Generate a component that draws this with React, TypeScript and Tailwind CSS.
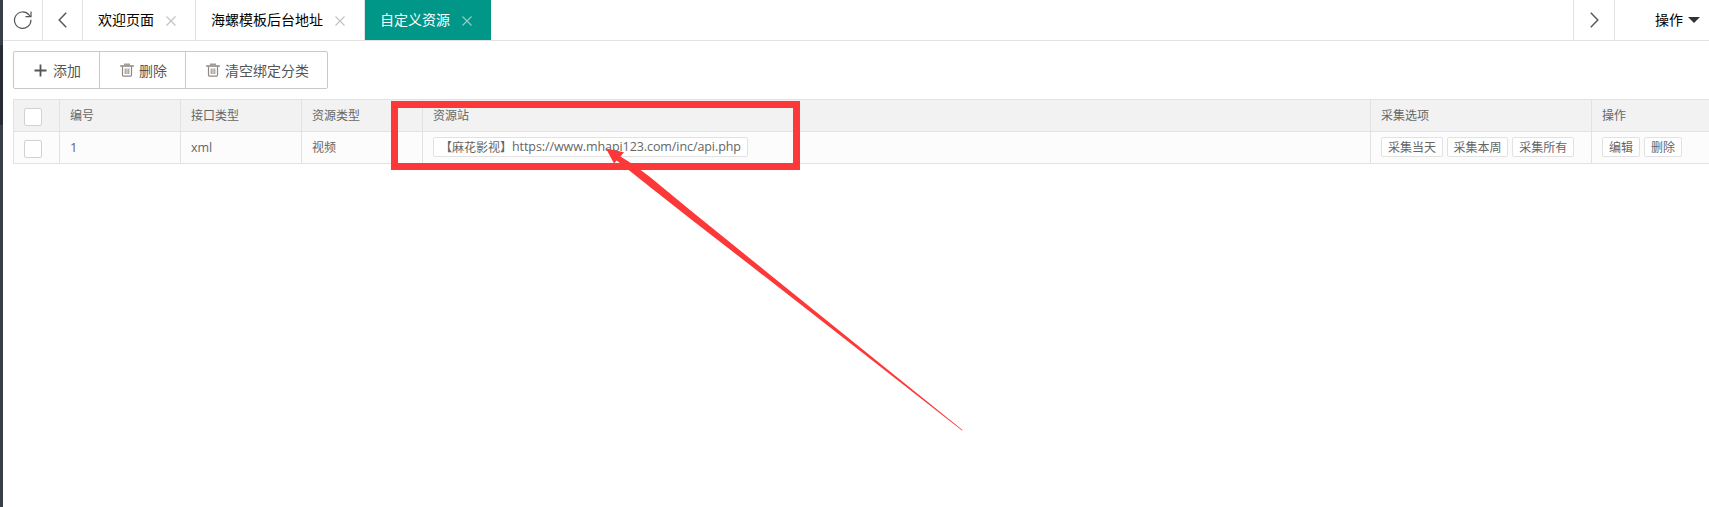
import React from "react";

const RefreshIcon = () => (
  <svg className="h-5 w-5" viewBox="0 0 20 20" fill="none" stroke="#555" strokeWidth="1.2">
    <path d="M17.9 9.8A8.2 8.2 0 1 1 16 4.9L17.4 6.4" />
    <path d="M18 1.5V6.6H12.5" />
  </svg>
);

const ChevronIcon = ({ flip }: { flip?: boolean }) => (
  <svg className={flip ? "h-4 w-[9px] rotate-180" : "h-4 w-[9px]"} viewBox="0 0 9 16" fill="none" stroke="#5a5a5a" strokeWidth="1.5">
    <path d="M8.2 0.8L1.2 8l7 7.2" />
  </svg>
);

const CloseIcon = ({ active }: { active?: boolean }) => (
  <svg className="mt-px h-[10px] w-[10px]" viewBox="0 0 10 10" fill="none" stroke={active ? "#93d0ca" : "#c2c2c2"} strokeWidth="1.1">
    <path d="M0.5 0.5l9 9M9.5 0.5l-9 9" />
  </svg>
);

const PlusIcon = () => (
  <svg className="h-[13px] w-[13px]" viewBox="0 0 13 13" stroke="#555" strokeWidth="1.8">
    <path d="M6.5 0.5v12M0.5 6.5h12" />
  </svg>
);

const TrashIcon = () => (
  <svg className="h-[14px] w-[14px]" viewBox="0 0 14 14" fill="none" stroke="#8d8784" strokeWidth="1">
    <path d="M4 1.2h6" strokeWidth="1.2" />
    <path d="M0.2 3h13.6" strokeWidth="2" stroke="#a5a09e" />
    <path d="M2.5 4v8q0 1.2 1 1.2h7q1 0 1-1.2V4" strokeWidth="1.2" />
    <path d="M5.2 5.5v5.5M7 5.5v5.5M8.8 5.5v5.5" />
  </svg>
);

const Tab = ({ label, width, active }: { label: string; width: string; active?: boolean }) => (
  <div
    className={`flex h-10 shrink-0 items-center justify-between pl-[15px] pr-[19px] text-[14px] leading-none ${width} ${
      active ? "bg-[#009688] text-white" : "border-r border-[#e2e2e2] text-black"
    }`}
  >
    <span className="whitespace-nowrap">{label}</span>
    <CloseIcon active={active} />
  </div>
);

const ToolButton = ({ label, width, icon }: { label: string; width: string; icon: React.ReactNode }) => (
  <button className={`flex h-9 items-center gap-[5px] pl-[20px] text-[14px] text-[#555] ${width}`}>
    {icon}
    <span className="whitespace-nowrap">{label}</span>
  </button>
);

const Tag = ({ children, width }: { children: React.ReactNode; width: string }) => (
  <a className={`-mt-px flex h-5 shrink-0 items-center rounded-[2px] border border-[#e2e2e2] bg-white pl-[6px] pt-px leading-none whitespace-nowrap ${width}`}>
    {children}
  </a>
);

const Check = () => <span className="mt-[3px] block h-[18px] w-[18px] rounded-[2px] border border-[#d2d2d2] bg-white" />;

const Row = ({ cells, head }: { cells: React.ReactNode[]; head?: boolean }) => (
  <div
    className={`grid h-8 grid-cols-[46px_121px_121px_121px_948px_221px_1fr] border-b border-[#e2e2e2] ${
      head ? "bg-[#f2f2f2]" : "bg-[#fcfcfc]"
    }`}
  >
    {cells.map((c, i) => (
      <div key={i} className={`flex items-center pl-[10px] leading-none ${i < 6 ? "border-r border-[#e2e2e2]" : ""}`}>
        {c}
      </div>
    ))}
  </div>
);

export default function App() {
  return (
    <div className="relative flex h-[507px] w-[1709px] overflow-hidden bg-white font-['Open_Sans','Noto_Sans_CJK_SC',sans-serif]">
      <aside className="flex w-[3px] shrink-0 flex-col bg-[#393d49]">
        <div className="mt-[45px] h-20 bg-[#282b33]" />
      </aside>
      <div className="flex min-w-0 flex-1 flex-col">
        <header className="flex h-[41px] border-b border-[#e2e2e2]">
          <div className="flex w-10 items-center justify-center border-r border-[#e2e2e2]"><RefreshIcon /></div>
          <div className="flex w-10 items-center justify-center border-r border-[#e2e2e2]"><ChevronIcon /></div>
          <Tab label="欢迎页面" width="w-[113px]" />
          <Tab label="海螺模板后台地址" width="w-[169px]" />
          <Tab label="自定义资源" width="w-[126px]" active />
          <div className="flex-1" />
          <div className="flex w-[42px] items-center justify-center border-x border-[#e2e2e2]"><ChevronIcon flip /></div>
          <div className="flex w-[94px] items-center justify-end gap-[5px] pr-[9px] text-[14px] leading-none text-black">
            操作
            <svg className="h-[6px] w-3" viewBox="0 0 12 6"><path d="M0 0h12L6 6z" fill="#333" /></svg>
          </div>
        </header>
        <main className="flex flex-col gap-[10px] pl-[10px] pt-[10px]">
          <div className="flex h-[38px] w-[315px] divide-x divide-[#c9c9c9] rounded-[2px] border border-[#c9c9c9]">
            <ToolButton label="添加" width="w-[86px]" icon={<span className="pr-px"><PlusIcon /></span>} />
            <ToolButton label="删除" width="w-[86px]" icon={<TrashIcon />} />
            <ToolButton label="清空绑定分类" width="w-[141px]" icon={<TrashIcon />} />
          </div>
          <section className="border-l border-t border-[#e2e2e2] text-[12px] text-[#666]">
            <Row head cells={[<Check />, "编号", "接口类型", "资源类型", "资源站", "采集选项", "操作"]} />
            <Row
              cells={[
                <Check />,
                <span className="text-[13px]">1</span>,
                <span className="pt-px text-[12.5px]">xml</span>,
                "视频",
                <Tag width="w-[315px]">
                  <span>【麻花影视】</span>
                  <span className="text-[12.5px] tracking-[-0.08px]">https://www.mhapi123.com/inc/api.php</span>
                </Tag>,
                <div className="flex gap-1">
                  <Tag width="w-[61.6px]">采集当天</Tag>
                  <Tag width="w-[61.6px]">采集本周</Tag>
                  <Tag width="w-[61.6px]">采集所有</Tag>
                </div>,
                <div className="flex gap-1">
                  <Tag width="w-[38px]">编辑</Tag>
                  <Tag width="w-[38px]">删除</Tag>
                </div>,
              ]}
            />
          </section>
        </main>
      </div>
      <div className="absolute left-[391px] top-[101px] h-[69px] w-[409px] border-[7px] border-[#fd3838]" />
      <svg className="absolute left-0 top-0 h-[507px] w-[1709px]" viewBox="0 0 1709 507" fill="#fd3838">
        <path d="M606 148.5L624 152.3L620.5 156.5L634 165L650 177L690 210L750 258.5L962.5 430L962 430.5L750 265L690 218.5L650 187L616.7 160.5L614 163.5Z" />
      </svg>
    </div>
  );
}
